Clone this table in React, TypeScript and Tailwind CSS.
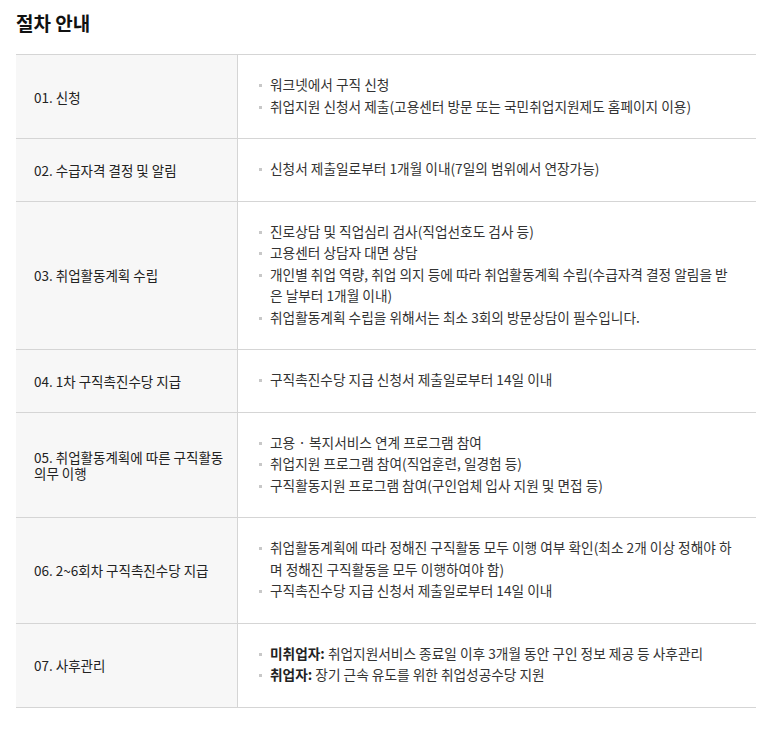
import React from "react";

type Item = { lines: React.ReactNode[] };
type Row = { title: React.ReactNode; items: Item[] };

const rows: Row[] = [
  {
    title: "01. 신청",
    items: [
      { lines: ["워크넷에서 구직 신청"] },
      { lines: ["취업지원 신청서 제출(고용센터 방문 또는 국민취업지원제도 홈페이지 이용)"] },
    ],
  },
  {
    title: "02. 수급자격 결정 및 알림",
    items: [{ lines: ["신청서 제출일로부터 1개월 이내(7일의 범위에서 연장가능)"] }],
  },
  {
    title: "03. 취업활동계획 수립",
    items: [
      { lines: ["진로상담 및 직업심리 검사(직업선호도 검사 등)"] },
      { lines: ["고용센터 상담자 대면 상담"] },
      {
        lines: [
          "개인별 취업 역량, 취업 의지 등에 따라 취업활동계획 수립(수급자격 결정 알림을 받",
          "은 날부터 1개월 이내)",
        ],
      },
      { lines: ["취업활동계획 수립을 위해서는 최소 3회의 방문상담이 필수입니다."] },
    ],
  },
  {
    title: "04. 1차 구직촉진수당 지급",
    items: [{ lines: ["구직촉진수당 지급 신청서 제출일로부터 14일 이내"] }],
  },
  {
    title: (
      <>
        05. 취업활동계획에 따른 구직활동
        <br />
        의무 이행
      </>
    ),
    items: [
      { lines: ["고용 · 복지서비스 연계 프로그램 참여"] },
      { lines: ["취업지원 프로그램 참여(직업훈련, 일경험 등)"] },
      { lines: ["구직활동지원 프로그램 참여(구인업체 입사 지원 및 면접 등)"] },
    ],
  },
  {
    title: "06. 2~6회차 구직촉진수당 지급",
    items: [
      {
        lines: [
          "취업활동계획에 따라 정해진 구직활동 모두 이행 여부 확인(최소 2개 이상 정해야 하",
          "며 정해진 구직활동을 모두 이행하여야 함)",
        ],
      },
      { lines: ["구직촉진수당 지급 신청서 제출일로부터 14일 이내"] },
    ],
  },
  {
    title: "07. 사후관리",
    items: [
      {
        lines: [
          <>
            <b className="font-bold text-[#222]">미취업자:</b> 취업지원서비스 종료일 이후 3개월 동안 구인 정보 제공 등 사후관리
          </>,
        ],
      },
      {
        lines: [
          <>
            <b className="font-bold text-[#222]">취업자:</b> 장기 근속 유도를 위한 취업성공수당 지원
          </>,
        ],
      },
    ],
  },
];

export default function App() {
  return (
    <div
      className="w-[775px] min-h-[730px] bg-white px-4 pt-[9px]"
      style={{ fontFamily: '"Noto Sans CJK KR", "Noto Sans", sans-serif' }}
    >
      <h2 className="text-[19px] leading-[27px] font-bold text-[#111] mb-[18px]">절차 안내</h2>
      <div className="w-[740px] border-t border-[#d5d5d5]">
        {rows.map((row, i) => (
          <div key={i} className="flex border-b border-[#d5d5d5]">
            <div className="w-[222px] shrink-0 bg-[#f7f7f7] border-r border-[#d5d5d5] pl-[18px] pr-1 flex items-center text-[13.5px] leading-[16px] text-[#222] whitespace-nowrap">
              <div>{row.title}</div>
            </div>
            <div className="flex-1 pl-[20px] pr-2 py-5 text-[13.7px] leading-[21.5px] text-[#333]">
              {row.items.map((item, j) => (
                <div key={j} className="flex gap-[8px]">
                  <span className="w-[3px] h-[3px] bg-[#c8c8c8] shrink-0 mt-[9px] ml-[1px]" />
                  <div className="whitespace-nowrap -mt-[1px] mb-[1px]">
                    {item.lines.map((l, k) => (
                      <div key={k}>{l}</div>
                    ))}
                  </div>
                </div>
              ))}
            </div>
          </div>
        ))}
      </div>
    </div>
  );
}
